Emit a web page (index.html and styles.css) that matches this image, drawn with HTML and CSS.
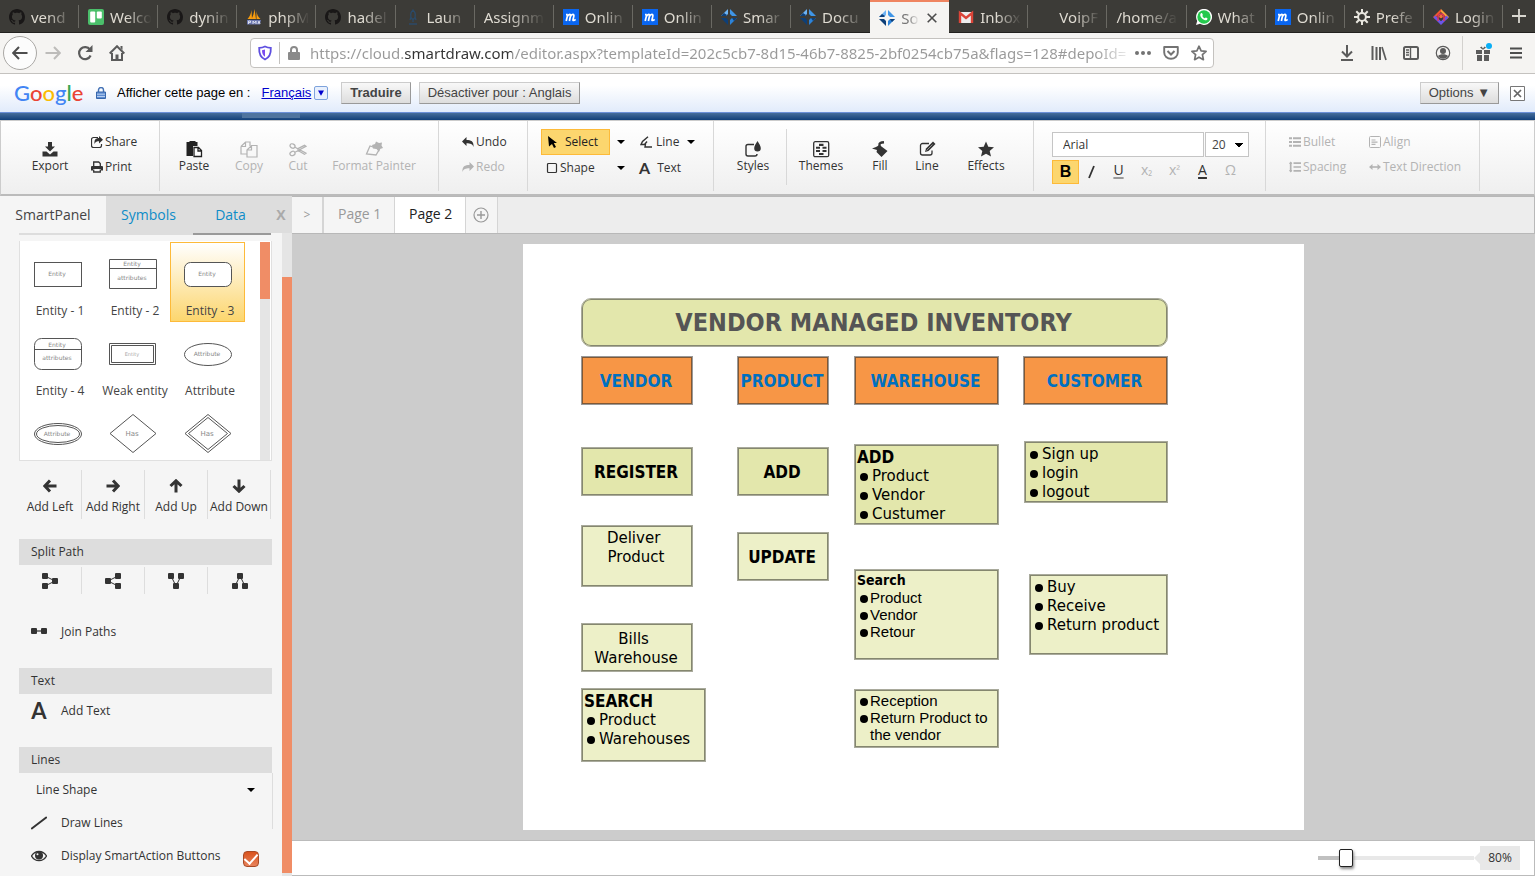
FILE: index.html
```html
<!DOCTYPE html>
<html lang="en">
<head>
<meta charset="utf-8">
<title>SmartDraw</title>
<link rel="stylesheet" href="styles.css">
</head>
<body>
<svg class="defs" aria-hidden="true">
  <symbol id="github" viewBox="0 0 16 16"><path fill="#191717" d="M8 0C3.58 0 0 3.58 0 8c0 3.54 2.29 6.53 5.47 7.59.4.07.55-.17.55-.38v-1.49c-2.01.37-2.53-.49-2.69-.94-.09-.23-.48-.94-.82-1.13-.28-.15-.68-.52-.01-.53.63-.01 1.08.58 1.23.82.72 1.21 1.87.87 2.33.66.07-.52.28-.87.51-1.07-1.78-.2-3.64-.89-3.64-3.95 0-.87.31-1.59.82-2.15-.08-.2-.36-1.02.08-2.12 0 0 .67-.21 2.2.82.64-.18 1.32-.27 2-.27s1.36.09 2 .27c1.53-1.04 2.2-.82 2.2-.82.44 1.1.16 1.92.08 2.12.51.56.82 1.27.82 2.15 0 3.07-1.87 3.75-3.65 3.95.29.25.54.73.54 1.48v2.2c0 .21.15.46.55.38A8 8 0 0 0 16 8c0-4.42-3.58-8-8-8z"/></symbol>
  <symbol id="trello" viewBox="0 0 16 16"><rect width="16" height="16" rx="2" fill="#4bbf6b"/><rect x="2.2" y="2.5" width="5" height="11" rx="1" fill="#fff"/><rect x="8.8" y="2.5" width="5" height="7" rx="1" fill="#fff"/></symbol>
  <symbol id="pma" viewBox="0 0 16 16"><path d="M5.500 1C5 5 3.500 8 1.500 10H6zM8.500 0C8 4 7 7 5.500 10H10zM10.500 2c.3 3 1.500 6 4 8h-4z" fill="#f89c0e"/><path d="M1 11h14l-1 4.500H1z" fill="#6c78af"/><path d="M2.500 15v-3h2v1.500h-2M7 15v-3l1.500 2L10 12v3M12 15l1-3 1 3" stroke="#e4e7f4" stroke-width=".9" fill="none"/></symbol>
  <symbol id="rocket" viewBox="0 0 16 16"><path d="M8 1c3 3 3 6 1 9H7C5 7 5 4 8 1zM6 8l-1 3m5-3 1 3M8 10v3M4 15h8" stroke="#2b4a68" fill="none" stroke-width="1.3"/></symbol>
  <symbol id="mm" viewBox="0 0 16 16"><rect width="16" height="16" fill="#0a66f0"/><path d="M3.2 12 4.8 5.4M4.3 7.5C6 4.5 8 5 7.4 7.3L6.4 12M7.2 7.8C9 4.4 11.4 5 10.8 7.4L10 10.8c-.2 1 1 1 2.6-.4M3 5.6h1.7" stroke="#fff" stroke-width="1.7" fill="none"/></symbol>
  <symbol id="sd" viewBox="0 0 16 16"><path fill="#6db3f5" d="M7 0v5L5 7H0z"/><path fill="#3f95e6" d="M9 0v5l2 2h5z"/><path fill="#0d3f78" d="M0 9h5l2 2v5z"/><path fill="#2d83d8" d="M16 9h-5l-2 2v5z"/><path fill="#0d3f78" d="M11 9h5l-3 3zM0 7l3-3 3 2-1 1z"/></symbol>
  <symbol id="gmail" viewBox="0 0 16 16"><path fill="#eee" d="M1 3h14v11H1z"/><path d="M2 14V4l6 5 6-5v10" fill="none" stroke="#dc4438" stroke-width="2.4"/></symbol>
  <symbol id="wa" viewBox="0 0 16 16"><path d="M0 16l1.2-4A8 8 0 1 1 4 14.8z" fill="#fff"/><circle cx="8" cy="8" r="6.7" fill="#25c94e"/><path d="M5 4.2c1-.9 1.600.8 1.900 1.800l-.6 1c.7 1.200 1.400 1.800 2.500 2.300l.9-.9c1 .3 2 .8 1.800 1.300-.3 1.500-1.700 1.800-3 1.300C6.200 10.100 5 8.500 4.500 7.200 4 5.900 4.300 4.900 5 4.200z" fill="#fff"/></symbol>
  <symbol id="gear" viewBox="0 0 16 16"><circle cx="8" cy="8" r="3.900" fill="none" stroke="#e8e6df" stroke-width="2"/><path d="M8 0v4M8 12v4M0 8h4M12 8h4M2.300 2.300l2.900 2.900M10.800 10.800l2.900 2.900M2.300 13.700l2.900-2.900M10.800 5.200l2.900-2.900" stroke="#e8e6df" stroke-width="2"/></symbol>
  <symbol id="login" viewBox="0 0 16 16"><path d="M8 0 0 8l2.500 2.500L8 5z" fill="#f0562e"/><path d="m8 0 8 8-2.500 2.500L8 5z" fill="#f9a23a"/><path d="m.5 8.500 7.500 7.500 7.500-7.500-2-2L8 12 2.500 6.500z" fill="#6a55e8"/><path d="M8 3 3.500 7.500 8 12l4.500-4.500z" fill="#3c3b37"/><path d="M5 12V8a3 3 0 0 1 6 0v4" fill="none" stroke="#e0365c" stroke-width="1.500"/><circle cx="8" cy="7.500" r="1.800" fill="#f2703a"/></symbol>
  <symbol id="caret" viewBox="0 0 8 4"><path d="M0 0h8L4 4z" fill="#000"/></symbol>
</svg>

<nav class="tabs">
  <div class="tab"><svg><use href="#github"/></svg><span>vend</span></div>
  <div class="tab"><svg><use href="#trello"/></svg><span>Welco</span></div>
  <div class="tab"><svg><use href="#github"/></svg><span>dynin</span></div>
  <div class="tab"><svg><use href="#pma"/></svg><span>phpM</span></div>
  <div class="tab"><svg><use href="#github"/></svg><span>hadel</span></div>
  <div class="tab"><svg><use href="#rocket"/></svg><span>Laun</span></div>
  <div class="tab"><span>Assignm</span></div>
  <div class="tab"><svg><use href="#mm"/></svg><span>Onlin</span></div>
  <div class="tab"><svg><use href="#mm"/></svg><span>Onlin</span></div>
  <div class="tab"><svg><use href="#sd"/></svg><span>Smar</span></div>
  <div class="tab before-active"><svg><use href="#sd"/></svg><span>Docu</span></div>
  <div class="tab active"><svg><use href="#sd"/></svg><span>So</span><button class="plain tab-close" aria-label="Close tab"><svg viewBox="0 0 10 10"><path d="m.7.7 8.600 8.600m0-8.600L.7 9.300" stroke="#4c4c4c" stroke-width="1.600"/></svg></button></div>
  <div class="tab"><svg><use href="#gmail"/></svg><span>Inbox</span></div>
  <div class="tab"><svg></svg><span>VoipF</span></div>
  <div class="tab"><span>/home/a</span></div>
  <div class="tab"><svg><use href="#wa"/></svg><span>What</span></div>
  <div class="tab"><svg><use href="#mm"/></svg><span>Onlin</span></div>
  <div class="tab"><svg><use href="#gear"/></svg><span>Prefe</span></div>
  <div class="tab"><svg><use href="#login"/></svg><span>Login</span></div>
  <button class="plain new-tab" aria-label="New tab"><svg viewBox="0 0 14 14"><path d="M7 0v14M0 7h14" stroke="#d9d7d0" stroke-width="1.800"/></svg></button>
</nav>

<header class="navbar">
  <button class="plain back" aria-label="Back"><svg viewBox="0 0 16 16"><path d="M15.500 8H1.500M7 2 1.200 8 7 14" fill="none" stroke="#4d4d4d" stroke-width="2"/></svg></button>
  <button class="plain nav-btn" aria-label="Forward"><svg viewBox="0 0 16 16"><path d="M.5 8h14M9 2l5.800 6L9 14" fill="none" stroke="#bdbcba" stroke-width="2"/></svg></button>
  <button class="plain nav-btn" aria-label="Reload"><svg viewBox="0 0 16 16"><path d="M13.600 10.500A6 6 0 1 1 13 4.600" fill="none" stroke="#5b5b5b" stroke-width="2.200"/><path d="M15.500 0v7h-7z" fill="#5b5b5b"/></svg></button>
  <button class="plain nav-btn" aria-label="Home"><svg viewBox="0 0 16 16"><path d="M.7 8.500 8 1.200l7.300 7.300M3 8v7h10V8" fill="none" stroke="#5b5b5b" stroke-width="2"/><path d="M6.500 9.500h3V15h-3z" fill="#5b5b5b"/><path d="M11.500 1h2v4l-2-2z" fill="#5b5b5b"/></svg></button>
  <div class="urlbar">
    <svg class="i16" viewBox="0 0 16 16"><path d="M8 1.500c2 1 4 1.300 5.800 1.300.3 5.500-.8 9.500-5.800 11.700C3 12.300 1.900 8.300 2.200 2.800 4 2.800 6 2.500 8 1.500z" fill="none" stroke="#5e4fe0" stroke-width="1.800"/><path d="M8 4.500v7.200c-2.300-1.500-3-3.700-3-6.500z" fill="#7a4cf0"/></svg>
    <i class="url-sep"></i>
    <svg class="lock" viewBox="0 0 12 14"><path d="M3 7V4a3 3 0 0 1 6 0v3" fill="none" stroke="#8a8a8a" stroke-width="2"/><rect y="6" width="12" height="8" rx="1" fill="#8a8a8a"/></svg>
    <input class="url" type="text" aria-label="Address" value="https://cloud.smartdraw.com/editor.aspx?templateId=202c5cb7-8d15-46b7-8825-2bf0254cb75a&amp;flags=128#depoId=">
    <button class="plain" aria-label="Page actions"><svg class="i16" viewBox="0 0 16 16"><g fill="#737373"><circle cx="2" cy="8" r="2"/><circle cx="8" cy="8" r="2"/><circle cx="14" cy="8" r="2"/></g></svg></button>
    <button class="plain" aria-label="Save to Pocket"><svg class="i16" viewBox="0 0 16 16"><path d="M1.200 2h13.600v5.500a6.800 6.300 0 0 1-13.600 0z" fill="none" stroke="#737373" stroke-width="1.900" stroke-linejoin="round"/><path d="m4.500 6 3.500 3.500L11.500 6" fill="none" stroke="#737373" stroke-width="2"/></svg></button>
    <button class="plain" aria-label="Bookmark"><svg class="i16" viewBox="0 0 16 16"><path d="m8 1.200 2.100 4.600 5 .5-3.700 3.400 1 5L8 12.200l-4.400 2.500 1-5L.9 6.300l5-.5z" fill="none" stroke="#737373" stroke-width="1.700" stroke-linejoin="round"/></svg></button>
  </div>
  <div class="nav-tools">
    <button class="plain" aria-label="Downloads"><svg class="i16" viewBox="0 0 16 16"><path d="M8 0v11M3 6.500 8 11.500l5-5M2 15h12" fill="none" stroke="#5b5b5b" stroke-width="2"/></svg></button>
    <button class="plain" aria-label="Library"><svg class="i16" viewBox="0 0 16 16"><path d="M1.500 1v14M5.500 2v13M9 2v13" stroke="#5b5b5b" stroke-width="2"/><path d="m11 2 4 13" stroke="#5b5b5b" stroke-width="1.700"/></svg></button>
    <button class="plain" aria-label="Sidebar"><svg class="i16" viewBox="0 0 16 16"><rect x="1" y="2" width="14" height="12" rx="1.500" fill="none" stroke="#5b5b5b" stroke-width="2"/><path d="M7.500 2v12M3 5h3M3 7.500h3M3 10h3" stroke="#5b5b5b" stroke-width="1.400"/></svg></button>
    <button class="plain" aria-label="Account"><svg class="i16" viewBox="0 0 16 16"><circle cx="8" cy="8" r="6.700" fill="none" stroke="#5b5b5b" stroke-width="1.200"/><circle cx="8" cy="6" r="3" fill="#5b5b5b"/><path d="M3 11c2-2.400 8-2.400 10 0-2 3.500-8 3.500-10 0z" fill="#5b5b5b"/></svg></button>
    <i class="tool-sep"></i>
    <button class="plain gift" aria-label="What's new"><svg viewBox="0 0 20 20"><path d="M4 7h6v4H4zM12 7h6v4h-6zM5 12h5v6H5zM12 12h5v6h-5z" fill="#5b5b5b"/><path d="M10.500 6.500 8 4.500l1.500-1L11 5.500l1.500-2 1.500 1-2.500 2z" fill="#5b5b5b"/><circle cx="17" cy="3" r="3" fill="#0aaef5"/></svg></button>
    <button class="plain" aria-label="Menu"><svg class="i16" viewBox="0 0 16 16"><path d="M2 3.500h12M2 8h12M2 12.500h12" stroke="#4d4d4d" stroke-width="1.800"/></svg></button>
  </div>
</header>

<section class="gbar">
  <div class="glogo" aria-label="Google"><b class="c1">G</b><b class="c2">o</b><b class="c3">o</b><b class="c1">g</b><b class="c4">l</b><b class="c2">e</b></div>
  <svg class="glock" viewBox="0 0 10 12"><path d="M2.500 5.500V3a2.500 2.500 0 0 1 5 0v2.500" fill="none" stroke="#4472b5" stroke-width="1.400"/><path d="M.5 5h9v6.500h-9z" fill="#5c8bd0" stroke="#3867ab"/><path d="M1 7.200h8M1 9.500h8" stroke="#b9cff0"/></svg>
  <span class="gtext">Afficher cette page en :</span>
  <a class="glang" href="#">Français</a>
  <button class="plain gdrop" aria-label="Choose language"><svg viewBox="0 0 8 7"><path d="M0 0h8L4 7z" fill="#0000cd"/></svg></button>
  <button class="gbtn gstrong">Traduire</button>
  <button class="gbtn">Désactiver pour : Anglais</button>
  <button class="gbtn goptions">Options ▼</button>
  <button class="plain gclose" aria-label="Close"><svg viewBox="0 0 15 15"><path d="M.5.5h14v14H.5z" fill="#fff" stroke="#777"/><path d="m4 4 7 7m0-7-7 7" stroke="#666" stroke-width="1.700"/></svg></button>
</section>
<div class="bluebar"><i></i></div>

<section class="ribbon">
  <div class="group g-file">
    <button class="big"><svg viewBox="0 0 18 18"><path d="M7 2h4v4.500h3l-5 5-5-5h3z" fill="#333"/><path d="M1.500 11.500h4l3.500 3 3.500-3h4v5h-15z" fill="#333"/></svg>Export</button>
    <div class="rows">
      <button class="small"><svg viewBox="0 0 12 12"><path d="M7 1.500H2.500a2 2 0 0 0-2 2v6a2 2 0 0 0 2 2h6a2 2 0 0 0 2-2V8" fill="none" stroke="#333" stroke-width="1.200"/><path d="M8 0v2C4.500 2 3 4 3.500 8 4.500 5.800 6 5.300 8 5.300v2.200L12 3.700z" fill="#333"/></svg>Share</button>
      <button class="small"><svg viewBox="0 0 12 12"><path d="M2.700 6V1h5l1.600 1.600V6M2.700 8.500V11h6.600V8.500" fill="none" stroke="#333" stroke-width="1.300"/><path d="M0 9.500V6q0-1 1-1h10q1 0 1 1v3.500h-2V8H2v1.500z" fill="#333"/></svg>Print</button>
    </div>
  </div>
  <div class="group g-clip">
    <button class="big"><svg viewBox="0 0 18 18"><path d="M1.500 2h3V1h6v1h2v4H8v10H1.500z" fill="#222"/><path d="M9 7.500h4.500l3 3v6H9zM13 8v3h3" fill="#fff" stroke="#222" stroke-width="1.300"/></svg>Paste</button>
    <button class="big off"><svg viewBox="0 0 18 18"><g fill="none" stroke="#b3b3b3" stroke-width="1.200"><path d="M1 6.500 5.500 2H10v4M1 6.500V14h6M1 6.500h4.500V2"/><path d="M7 10 11.500 5.500H17V17H7zh4.500V5.500"/></g></svg>Copy</button>
    <button class="big off"><svg viewBox="0 0 18 18"><g fill="none" stroke="#b3b3b3" stroke-width="1.300"><ellipse cx="3.500" cy="6" rx="2.600" ry="2.100" transform="rotate(25 3.500 6)"/><ellipse cx="3.500" cy="13.500" rx="2.600" ry="2.100" transform="rotate(-25 3.500 13.500)"/><path d="m6 7.200 11 6-1.500 1L9 10.500m-3 1.800 11-6-1.500-1L8 9.200"/></g></svg>Cut</button>
    <button class="big off"><svg viewBox="0 0 18 18"><path d="M5 6 1.500 14 11 15l3.500-6z" fill="none" stroke="#b3b3b3" stroke-width="1.300"/><path d="m7 5 3-1 1-2.500 3 1.500 3-.5-.5 3L18 8l-3 1-1 3-2.500-3L8 8.500z" fill="#b3b3b3"/></svg>Format Painter</button>
  </div>
  <div class="group g-undo">
    <div class="rows">
      <button class="small"><svg viewBox="0 0 12 12"><path d="M4.500 1v3C9 4 12 5 11.500 11 10.500 8 8.500 7.300 4.500 7.300V10L0 5.500z" fill="#333"/></svg>Undo</button>
      <button class="small off"><svg viewBox="0 0 12 12"><path d="M7.500 1v3C3 4 0 5 .5 11c1-3 3-3.700 7-3.700V10L12 5.500z" fill="#b3b3b3"/></svg>Redo</button>
    </div>
  </div>
  <div class="group g-draw">
    <button class="small select"><svg viewBox="0 0 12 12"><path d="m1 0 9 7H6.800L9 11l-2 1-2-4-3 2.500z" fill="#000"/></svg>Select</button>
    <button class="plain drop" aria-label="Select options"><svg><use href="#caret"/></svg></button>
    <button class="small line"><svg viewBox="0 0 12 12"><path d="M8 .8 2.500 5.500l-1.500 3h3.500L7 5.500M5.500 8l-.5 3h7" fill="none" stroke="#333" stroke-width="1.400"/></svg>Line</button>
    <button class="plain drop" aria-label="Line options"><svg><use href="#caret"/></svg></button>
    <button class="small shape"><svg viewBox="0 0 12 12"><rect x="1.500" y="1.500" width="9" height="9" rx="1" fill="none" stroke="#333" stroke-width="1.200"/></svg>Shape</button>
    <button class="plain drop" aria-label="Shape options"><svg><use href="#caret"/></svg></button>
    <button class="small text"><b>A</b>Text</button>
  </div>
  <div class="group g-style">
    <button class="big styles-btn"><svg viewBox="0 0 18 18"><path d="M10 4.500H4a2 2 0 0 0-2 2V14a2 2 0 0 0 2 2h7a2 2 0 0 0 2-2" fill="none" stroke="#333" stroke-width="1.400"/><path d="M13.500 1c2 3.500 3.300 5 3.300 7.300a3.300 3.300 0 0 1-6.600 0C10.200 6 11.500 4.500 13.500 1z" fill="#333"/></svg>Styles</button>
    <button class="big"><svg viewBox="0 0 18 18"><rect x="1.700" y="1.700" width="15" height="15" rx="1.500" fill="none" stroke="#333" stroke-width="1.300"/><path d="M7 3.800h4.500V6H7zM4 6.700h4v2H4zM10.500 6.700h4v2h-4zM4 10h4v2H4zM10.500 10h4v2h-4zM7 13h4.500v2H7z" fill="#333"/></svg>Themes</button>
    <button class="big"><svg viewBox="0 0 18 18"><path d="M8.500 5 16.500 11 10.500 17 5.500 12l.5-2L1 8.500l4-1.500z" fill="#333"/><path d="M8.500 8V5q-.5-2.500 4.500-2.800" fill="none" stroke="#333" stroke-width="2.400"/></svg>Fill</button>
    <button class="big"><svg viewBox="0 0 18 18"><path d="M11 3.500H4.500a2 2 0 0 0-2 2V13a2 2 0 0 0 2 2H12a2 2 0 0 0 2-2v-2.500" fill="none" stroke="#333" stroke-width="1.300"/><path d="M7 12l1-3.500 7-7L17.500 4l-7 7z" fill="#333"/><path d="m8.500 10.500 6-6" stroke="#aaa" stroke-width=".8"/></svg>Line</button>
    <button class="big"><svg viewBox="0 0 18 18"><path d="m9 1.500 2.300 5.200 5.700.5-4.300 3.800 1.300 5.600L9 13.700l-5 2.900L5.300 11 1 7.200l5.700-.5z" fill="#333"/></svg>Effects</button>
  </div>
  <div class="group g-font">
    <div class="font-row">
      <input class="font-name" type="text" aria-label="Font" value="Arial">
      <select class="font-size" aria-label="Font size"><option>20</option></select>
    </div>
    <div class="format-row">
      <button class="fmt on" aria-label="Bold"><b>B</b></button>
      <button class="fmt slant" aria-label="Italic"><svg viewBox="0 0 16 16"><path d="m5 14 5-12" stroke="#333" stroke-width="1.800"/></svg></button>
      <button class="fmt under" aria-label="Underline">U</button>
      <button class="fmt off">x<small>₂</small></button>
      <button class="fmt off">x<small>²</small></button>
      <button class="fmt under dark" aria-label="Font colour">A</button>
      <button class="fmt off">Ω</button>
    </div>
  </div>
  <div class="group g-para">
    <button class="small off"><svg viewBox="0 0 12 12"><path d="M0 2.200h3M0 6h3M0 9.800h3M4 2.200h8M4 6h8M4 9.800h8" stroke="#b3b3b3" stroke-width="1.900"/></svg>Bullet</button>
    <button class="small off"><svg viewBox="0 0 12 12"><rect x=".5" y=".5" width="11" height="11" rx="1" fill="none" stroke="#b3b3b3"/><path d="M2.500 4h4M2.500 6.200h6M2.500 8.400h4" stroke="#b3b3b3" stroke-width="1.200"/></svg>Align</button>
    <button class="small off"><svg viewBox="0 0 12 12"><path d="M4.500 2.200H12M4.500 6H12M4.500 9.800H12M1.700 1v10" stroke="#b3b3b3" stroke-width="1.700"/><path d="m0 3 1.700-2.500L3.400 3zM0 9l1.700 2.500L3.400 9z" fill="#b3b3b3"/></svg>Spacing</button>
    <button class="small off"><svg viewBox="0 0 12 12"><path d="M1 6h10" stroke="#b3b3b3" stroke-width="1.600"/><path d="m0 6 3.500-3v6zM12 6 8.500 3v6z" fill="#b3b3b3"/></svg>Text Direction</button>
  </div>
</section>

<main class="work">
  <aside class="panel">
    <div class="panel-tabs">
      <button class="ptab current">SmartPanel</button><button class="ptab">Symbols</button><button class="ptab data">Data</button><button class="ptab close" aria-label="Close panel">X</button>
    </div>
    <div class="panel-body">
      <div class="panel-content">
        <div class="underline"><i></i></div>
        <div class="library">
          <div class="shapes">
            <button class="shape-item"><svg viewBox="0 0 75 60"><rect x="14.500" y="20.500" width="47" height="24"/><text x="37" y="34">Entity</text></svg>Entity - 1</button>
            <button class="shape-item"><svg viewBox="0 0 75 60"><path d="M14.500 17.500h47v29h-47zM14.500 26.500h47"/><text x="37" y="24">Entity</text><text x="37" y="38">attributes</text></svg>Entity - 2</button>
            <button class="shape-item chosen"><svg viewBox="0 0 75 60"><rect x="14.500" y="20.500" width="47" height="24" rx="6"/><text x="37" y="34">Entity</text></svg>Entity - 3</button>
            <button class="shape-item"><svg viewBox="0 0 75 60"><rect x="14.500" y="16.500" width="47" height="31" rx="7"/><path d="M14.500 27.500h47"/><text x="37" y="25">Entity</text><text x="37" y="38">attributes</text></svg>Entity - 4</button>
            <button class="shape-item"><svg viewBox="0 0 75 60"><path d="M14.500 21.500h46v21h-46zM16.500 23.500h42v17h-42z"/><text class="light" x="37" y="34">Entity</text></svg>Weak entity</button>
            <button class="shape-item"><svg viewBox="0 0 75 60"><ellipse cx="38" cy="32.500" rx="23.500" ry="11"/><text x="37" y="34">Attribute</text></svg>Attribute</button>
            <button class="shape-item" aria-label="Multivalued attribute"><svg viewBox="0 0 75 60"><ellipse cx="38" cy="32" rx="23.500" ry="10.500"/><ellipse cx="38" cy="32" rx="21.500" ry="8.500"/><text x="37" y="34">Attribute</text></svg></button>
            <button class="shape-item" aria-label="Relationship"><svg viewBox="0 0 75 60"><path d="m38 12.500 23 19-23 19-23-19z"/><text class="has" x="37" y="34">Has</text></svg></button>
            <button class="shape-item" aria-label="Weak relationship"><svg viewBox="0 0 75 60"><path d="m38 12.500 23 19-23 19-23-19zm0 3 19.500 16L38 47.500l-19.500-16z"/><text class="has" x="37" y="34">Has</text></svg></button>
          </div>
          <div class="lib-scroll"><i></i></div>
        </div>
        <div class="quad adds">
          <button><svg viewBox="0 0 14 14"><path d="M13.500 7H2M7 1.500 1.800 7 7 12.500"/></svg>Add Left</button>
          <button><svg viewBox="0 0 14 14"><path d="M.5 7H12M7 1.500 12.200 7 7 12.500"/></svg>Add Right</button>
          <button><svg viewBox="0 0 14 14"><path d="M7 13.500V2M1.500 7 7 1.800 12.500 7"/></svg>Add Up</button>
          <button><svg viewBox="0 0 14 14"><path d="M7 .5V12M1.500 7 7 12.200 12.500 7"/></svg>Add Down</button>
        </div>
        <h3>Split Path</h3>
        <div class="quad splits">
          <button aria-label="Merge right"><svg viewBox="0 0 16 16"><path d="m3 3 10 5-10 5"/><g class="n"><rect width="6" height="6" rx="1"/><rect y="10" width="6" height="6" rx="1"/><rect x="10" y="5" width="6" height="6" rx="1"/></g></svg></button>
          <button aria-label="Split right"><svg viewBox="0 0 16 16"><path d="M13 3 3 8l10 5"/><g class="n"><rect x="10" width="6" height="6" rx="1"/><rect x="10" y="10" width="6" height="6" rx="1"/><rect y="5" width="6" height="6" rx="1"/></g></svg></button>
          <button aria-label="Merge down"><svg viewBox="0 0 16 16"><path d="m3 3 5 10 5-10"/><g class="n"><rect width="6" height="6" rx="1"/><rect x="10" width="6" height="6" rx="1"/><rect x="5" y="10" width="6" height="6" rx="1"/></g></svg></button>
          <button aria-label="Split down"><svg viewBox="0 0 16 16"><path d="M3 13 8 3l5 10"/><g class="n"><rect x="5" width="6" height="6" rx="1"/><rect y="10" width="6" height="6" rx="1"/><rect x="10" y="10" width="6" height="6" rx="1"/></g></svg></button>
        </div>
        <button class="prow join"><svg viewBox="0 0 16 16"><path d="M3 7h10" stroke="#333" stroke-width="1.200"/><g fill="#333"><rect y="4" width="6" height="6" rx="1"/><rect x="10" y="4" width="6" height="6" rx="1"/></g></svg>Join Paths</button>
        <h3>Text</h3>
        <button class="prow addtext"><b>A</b>Add Text</button>
        <h3>Lines</h3>
        <div class="lines">
          <button class="prow shape-row">Line Shape<svg><use href="#caret"/></svg></button>
          <button class="prow"><svg viewBox="0 0 16 16"><path d="M.8 13.500 15.200 2.500" stroke="#333" stroke-width="2" stroke-linecap="round"/></svg>Draw Lines</button>
        </div>
        <label class="prow actions"><svg viewBox="0 0 16 16"><path d="M.5 8C4 2 12 2 15.500 8 12 14 4 14 .5 8z" fill="none" stroke="#333" stroke-width="1.300"/><circle cx="8" cy="7.600" r="4" fill="#333"/><circle cx="6.500" cy="6.200" r="1" fill="#f5f5f5"/></svg><span>Display SmartAction Buttons</span><input type="checkbox" checked></label>
      </div>
      <div class="panel-scroll"><i></i></div>
    </div>
  </aside>

  <section class="editor">
    <div class="pages">
      <button class="chev">&gt;</button><button class="page-tab">Page 1</button><button class="page-tab shown">Page 2</button><button class="add-page" aria-label="Add page"><svg viewBox="0 0 16 16"><circle cx="8" cy="8" r="7" fill="none" stroke="#999" stroke-width="1.200"/><path d="M8 4v8M4 8h8" stroke="#999" stroke-width="1.400"/></svg></button>
    </div>
    <div class="canvas">
      <div class="sheet">
        <div class="node title n1">VENDOR MANAGED INVENTORY</div>
        <div class="node head n2">VENDOR</div>
        <div class="node head n3">PRODUCT</div>
        <div class="node head n4">WAREHOUSE</div>
        <div class="node head n5">CUSTOMER</div>
        <div class="node deep strong n6">REGISTER</div>
        <div class="node deep strong n7">ADD</div>
        <div class="node deep list n8"><b>ADD</b><ul><li>Product</li><li>Vendor</li><li>Custumer</li></ul></div>
        <div class="node deep list n9"><ul><li>Sign up</li><li>login</li><li>logout</li></ul></div>
        <div class="node topped n10"><span>Deliver&nbsp;<br>Product</span></div>
        <div class="node strong n11">UPDATE</div>
        <div class="node list arial n12"><b>Search</b><ul><li>Product</li><li>Vendor</li><li>Retour</li></ul></div>
        <div class="node list n13"><ul><li>Buy</li><li>Receive</li><li>Return product</li></ul></div>
        <div class="node n14"><span>Bills&nbsp;<br>Warehouse</span></div>
        <div class="node list n15"><b>SEARCH</b><ul><li>Product</li><li>Warehouses</li></ul></div>
        <div class="node list arial n16"><ul><li>Reception</li><li>Return Product to the vendor</li></ul></div>
      </div>
    </div>
    <footer class="zoombar">
      <input class="zoom" type="range" min="0" max="100" value="15" aria-label="Zoom">
      <output class="zoom-value">80%</output>
    </footer>
  </section>
</main>
</body>
</html>
```
FILE: styles.css
```css
:root {
  --chrome: "Noto Sans", "Open Sans", sans-serif;
  --app: "Open Sans", "Noto Sans", sans-serif;
  --sheet: "DejaVu Sans", sans-serif;
  --sheet-bold: "DejaVu Sans Condensed", "DejaVu Sans", sans-serif;
  --arial: "Liberation Sans", Arial, sans-serif;
}
* { box-sizing: border-box; }
body { margin: 0; min-height: 100vh; display: flex; flex-direction: column; font: 12px/16px var(--app); color: #333; background: #fff; }
button { margin: 0; padding: 0; border: 0; background: none; font: inherit; color: inherit; white-space: nowrap; }
.plain { display: flex; align-items: center; justify-content: center; }
.defs { display: none; }
svg { display: block; flex: none; }
.i16 { width: 16px; height: 16px; }

/* browser tabs */
.tabs { display: grid; grid-template-columns: repeat(19, minmax(0, 1fr)) 32px; grid-template-rows: 32px; height: 33px; background: #3c3b37; border-bottom: 1px solid #22211f; font: 15px/20px var(--chrome); color: #dfdbd2; }
.tab { min-width: 0; display: flex; align-items: center; gap: 6px; padding: 1px 2px 0 9px; position: relative; }
.tab::after { content: ""; position: absolute; right: 0; top: 5px; bottom: 4px; width: 1px; background: #6a6963; }
.tab svg { width: 16px; height: 16px; }
.tab span { flex: 1; white-space: nowrap; mask-image: linear-gradient(90deg, #000 35%, transparent 90%); }
.tab.active { background: #f5f4f2; border-top: 2px solid #ef8460; color: #777; padding: 0 12px 0 9px; margin-bottom: -1px; }
.tab.active::after, .tab.before-active::after { display: none; }
.tab-close svg { width: 10px; height: 10px; }
.new-tab svg { width: 14px; height: 14px; }

/* address bar */
.navbar { display: flex; align-items: center; height: 41px; padding: 0 11px 0 3px; background: #f5f4f2; border-bottom: 1px solid #c4c2bf; }
.back { width: 34px; height: 34px; border: 1px solid #aaa8a5; border-radius: 50%; background: #fcfcfc; }
.back svg, .nav-btn svg { width: 16px; height: 16px; }
.nav-btn { width: 32px; height: 32px; }
.urlbar { flex: 1; display: flex; align-items: center; gap: 12px; height: 30px; margin-left: 117px; padding: 0 6px; border: 1px solid #c4c2bf; border-radius: 4px; background: #fff; }
.url-sep { width: 1px; height: 22px; margin: 0 -4px 0 -6px; background: #c4c2bf; }
.lock { width: 12px; height: 14px; }
.url { flex: 1; min-width: 0; margin: 0 -4px 0 -2px; padding: 0; border: 0; outline: 0; font: 15px/20px var(--chrome); color: #333; background: linear-gradient(90deg, #999 94px, #333 94px, #333 202px, #999 202px, #999 785px, #fff 825px) text; -webkit-text-fill-color: transparent; }
.nav-tools { display: flex; align-items: center; gap: 16px; margin-left: 125px; }
.tool-sep { width: 1px; height: 34px; margin: 0 -7px 0 -5px; background: #d3d1ce; }
.gift svg { width: 20px; height: 20px; }

/* translate bar */
.gbar { display: flex; align-items: center; height: 39px; padding: 0 10px 0 14px; background: linear-gradient(#fff 30%, #e1ebfb); border-bottom: 1px solid #6a8fd8; font: 13px/16px var(--arial); color: #000; }
.glogo { width: 68px; font: 22px/26px "Lato", sans-serif; }
.glogo b { font-weight: 500; }
.c1 { color: #4285f4; } .c2 { color: #ea4335; } .c3 { color: #fbbc05; } .c4 { color: #34a853; }
.glock { width: 10px; height: 12px; margin: 0 11px 0 14px; }
.glang { margin: 0 3px 0 11px; color: #0000cd; }
.gdrop { width: 14px; height: 14px; margin-right: 13px; border: 1px solid #7ea3dc; border-radius: 2px; background: #e8f0fd; }
.gdrop svg { width: 6px; height: 6px; }
.gbtn { height: 22px; margin-right: 8px; padding: 0 8px; border: 1px solid; border-color: #ccc #999 #999 #ccc; background: linear-gradient(#f8f8f8, #ddd); color: #444; }
.gstrong { font-weight: bold; }
.goptions { margin-left: auto; margin-right: 11px; }
.gclose svg { width: 15px; height: 15px; }
.bluebar { height: 7px; padding-left: 242px; background: linear-gradient(#466d9b, #12407a); }
.bluebar i { display: block; width: 58px; height: 5px; background: #4f749f; }

/* ribbon */
.ribbon { display: flex; height: 76px; border: 1px solid #ccc; border-bottom: 2px solid #bbb; background: linear-gradient(#fff, #efefef); }
.group { display: flex; flex: none; height: 70px; border-right: 1px solid #d8d8d8; }
.big { display: flex; flex-direction: column; align-items: center; padding-top: 19px; }
.big svg { width: 18px; height: 18px; }
.off { color: #b3b3b3; }
.small { display: flex; align-items: center; gap: 2px; height: 25px; }
.small svg { width: 12px; height: 12px; }
.rows { padding-top: 8px; }
.g-file { width: 159px; padding-left: 26px; }
.g-file .big { width: 46px; margin-right: 18px; }
.g-clip { width: 279px; display: grid; grid-template-columns: 56px 54px 44px 108px; padding-left: 6px; }
.g-undo { width: 89px; padding-left: 23px; }
.g-draw { width: 186px; display: grid; grid-template: 26px 26px / 69px 22px 51px 16px; align-content: start; padding: 8px 0 0 13px; }
.select { height: 26px; gap: 6px; padding-left: 5px; border: 1px solid #fdba39; background: #fcd66e; color: #222; }
.line { gap: 4px; margin-left: 8px; }
.shape { margin-left: 5px; }
.text { gap: 7px; margin-left: 7px; }
.text b { font: bold 16px/18px "Lato", sans-serif; }
.drop svg { width: 8px; height: 4px; }
.g-style { width: 320px; display: grid; grid-template-columns: 67px 68px 50px 44px 74px; padding-left: 6px; }
.styles-btn { height: 56px; margin-top: 8px; padding-top: 11px; border-right: 1px solid #d8d8d8; }
.g-font { width: 232px; flex-direction: column; padding: 11px 0 0 18px; gap: 3px; }
.font-row { display: flex; gap: 1px; }
.font-name { width: 152px; height: 25px; padding: 0 10px; border: 1px solid #c5c5c5; background: #fff; font: inherit; color: #333; }
.font-size { appearance: none; width: 44px; height: 25px; padding: 0 6px; border: 1px solid #c5c5c5; border-radius: 0; font: inherit; color: #444; background: conic-gradient(from 315deg at 50% 100%, #000 90deg, #fff 0) no-repeat 29px 10px / 8px 4px, #fff; }
.format-row { display: flex; gap: 1px; }
.fmt { display: flex; align-items: center; justify-content: center; width: 27px; height: 24px; padding: 0 6px 4px 0; font-size: 14px; }
.fmt svg { width: 16px; height: 16px; }
.fmt.slant { padding: 0 4px 0 0; }
.fmt small { font-size: 11px; }
.fmt.on { padding: 0; border: 1px solid #fdba39; background: #fcd66e; }
.fmt.on b { font: bold 16px/20px var(--arial); color: #000; }
.under { text-decoration: underline #999 2px; text-underline-offset: 2px; }
.under.dark { text-decoration-color: #333; }
.g-para { width: 214px; display: grid; grid-template: 25px 25px / 80px 100px; align-content: start; padding: 8px 0 0 23px; }

/* workspace */
.work { flex: 1; display: flex; min-height: 680px; }
.panel { display: flex; flex-direction: column; width: 292px; flex: none; background: #f5f5f5; }
.panel-tabs { display: flex; height: 37px; background: #ddd; font-size: 14px; color: #0e8cc8; }
.ptab.current { width: 106px; background: #f5f5f5; color: #444; }
.ptab { width: 85px; }
.ptab.data { width: 79px; }
.ptab.close { flex: 1; font-weight: bold; color: #aaa; }
.panel-body { flex: 1; display: flex; }
.panel-content { flex: 1; min-width: 0; padding: 0 10px 0 19px; }
.underline { height: 2px; width: 252px; background: #ddd; display: flex; justify-content: flex-end; }
.underline i { width: 78px; background: #999; }
.library { display: flex; justify-content: space-between; height: 220px; margin-top: 6px; padding: 1px 1px 0 0; border: 1px solid #e0e0e0; border-top: 0; background: #fff; }
.shapes { display: grid; grid-template-columns: repeat(3, 75px); grid-auto-rows: 80px; height: 218px; overflow: hidden; }
.shape-item { display: flex; flex-direction: column; align-items: center; gap: 1px; border: 1px solid transparent; color: #444; text-indent: 5px; }
.shape-item svg { width: 75px; height: 60px; margin-top: -1px; text-indent: 0; fill: none; stroke: #555; }
.shape-item.chosen { border-color: #fdba39; background: linear-gradient(#fff, #fcd66e); }
.chosen rect { fill: #fff; }
.shape-item text { fill: #888; stroke: none; font: 6px "DejaVu Sans", sans-serif; text-anchor: middle; }
.shape-item .light { fill: #aaa; font-size: 5px; }
.shape-item .has { font-size: 7px; }
.lib-scroll { width: 10px; background: #e5e5e5; }
.lib-scroll i { display: block; height: 57px; background: #f08d66; }
.quad { display: grid; grid-template-columns: repeat(4, 63px); }
.quad button { display: flex; flex-direction: column; align-items: center; border-right: 1px solid #ddd; }
.adds { margin: 9px 0 20px; }
.adds button { height: 49px; gap: 6px; padding-top: 9px; }
.adds svg { width: 14px; height: 14px; fill: none; stroke: #333; stroke-width: 3; }
h3 { margin: 0; padding: 5px 12px; background: #ddd; font-size: 12px; line-height: 16px; font-weight: normal; }
.splits { margin: 2px 0 25px; }
.splits button { height: 27px; padding-top: 6px; }
.splits button:last-child { border: 0; }
.splits svg { width: 16px; height: 16px; fill: none; stroke: #333; }
.splits .n { fill: #333; stroke: none; }
.prow { display: flex; align-items: center; gap: 14px; width: 100%; height: 33px; padding-left: 12px; }
.prow svg { width: 16px; height: 16px; }
.join { height: 26px; margin-bottom: 23px; }
.addtext { margin-bottom: 20px; }
.addtext b { width: 16px; font: bold 22px/24px "Lato", sans-serif; }
.lines { height: 56px; margin-right: -1px; border-right: 1px solid #ddd; }
.shape-row { justify-content: space-between; padding: 0 17px; }
.shape-row svg { width: 8px; height: 4px; }
.actions { height: 26px; margin-top: 14px; }
.actions span { flex: 1; white-space: nowrap; }
.actions input { appearance: none; width: 16px; height: 16px; margin: 6px 13px 0 0; border: 1px solid #a84a26; border-radius: 4px; background: linear-gradient(#d9531e, #e8825a); display: grid; place-items: center; }
.actions input::after { content: ""; width: 6px; height: 11px; margin-top: -3px; border: solid #fff; border-width: 0 2px 2px 0; transform: rotate(42deg); }
.panel-scroll { width: 10px; padding: 44px 0 3px; background: #e5e5e5; display: flex; }
.panel-scroll i { flex: 1; background: #f08d66; }

.editor { flex: 1; min-width: 0; display: flex; flex-direction: column; }
.pages { display: flex; height: 38px; background: #ededed; border: solid #b8b8b8; border-width: 1px 1px 1px 0; font-size: 14px; color: #999; }
.pages button { padding: 0 14px 2px; border-right: 1px solid #d5d5d5; background: #f5f5f5; }
.pages .chev { width: 32px; padding: 0; border-right-width: 2px; font-size: 12px; }
.page-tab { width: 71px; }
.pages .shown { background: #fff; color: #222; }
.pages .add-page { width: 32px; padding: 0 7px; }
.add-page svg { width: 16px; height: 16px; }
.canvas { flex: 1; padding: 10px; background: #ccc; }
.sheet { position: relative; width: 781px; height: 586px; margin: 0 auto; background: #fff; }

/* diagram nodes */
.node { position: absolute; display: flex; align-items: center; justify-content: center; width: 112px; height: 49px; padding: 2px 2px 0 0; border: 1px solid #a9aa9c; box-shadow: inset 0 0 0 1px #85876f; background: #edf0c8; color: #000; font: 15px/19px var(--sheet); text-align: center; white-space: nowrap; }
.deep { background: #e3e7ac; }
.strong, .head, .title, .list b { font: bold 17px/19px var(--sheet-bold); }
.title { padding-top: 0; background: #e3e7ac; border-radius: 10px; font-size: 25px; color: #555; }
.head { background: #f79646; border-color: #999; box-shadow: inset 0 0 0 1px #805835; color: #0070c0; }
.topped { align-items: flex-start; padding-top: 3px; }
.list { display: block; padding: 3px 0 0 2px; text-align: left; white-space: normal; }
.list b { display: block; }
.list ul { margin: 0; padding: 0; list-style: none; }
.list li { position: relative; padding-left: 15px; }
.list li::before { content: ""; position: absolute; left: 3px; top: 6px; width: 8px; height: 8px; border-radius: 50%; background: #000; }
.arial { padding-top: 2px; font: 15px/17px var(--arial); }
.arial b { font: bold 14px/17px var(--sheet-bold); }
.arial ul li { padding-left: 13px; }
.n1 { left: 58px; top: 54px; width: 587px; }
.n2 { left: 58px; top: 112px; }
.n3 { left: 214px; top: 112px; width: 92px; }
.n4 { left: 331px; top: 112px; width: 145px; }
.n5 { left: 500px; top: 112px; width: 145px; }
.n6 { left: 58px; top: 203px; }
.n7 { left: 214px; top: 203px; width: 92px; }
.n8 { left: 331px; top: 200px; width: 145px; height: 81px; }
.n9 { left: 501px; top: 197px; width: 144px; height: 62px; }
.n10 { left: 58px; top: 281px; height: 62px; }
.n11 { left: 214px; top: 288px; width: 92px; }
.n12 { left: 331px; top: 325px; width: 145px; height: 91px; }
.n13 { left: 506px; top: 330px; width: 139px; height: 81px; }
.n14 { left: 58px; top: 379px; }
.n15 { left: 58px; top: 444px; width: 125px; height: 74px; }
.n16 { left: 331px; top: 445px; width: 145px; height: 59px; }

.zoombar { display: flex; align-items: center; justify-content: flex-end; height: 36px; padding-right: 14px; border: solid #bbb; border-width: 1px 1px 1px 0; background: #fff; }
.zoom { appearance: none; width: 156px; height: 18px; margin: 0; background: linear-gradient(90deg, #c0c0c0 15%, #e8e8e8 15%) no-repeat center / 100% 4px; }
.zoom::-webkit-slider-thumb { appearance: none; width: 14px; height: 18px; border: 1px solid #222; border-radius: 2px; background: #fff; box-shadow: 1px 2px 3px #888; }
.zoom-value { display: flex; align-items: center; justify-content: center; width: 46px; height: 24px; padding-left: 6px; background: #e8e8e8; clip-path: polygon(0 50%, 6px 25%, 6px 0, 100% 0, 100% 100%, 6px 100%, 6px 75%); }
```
